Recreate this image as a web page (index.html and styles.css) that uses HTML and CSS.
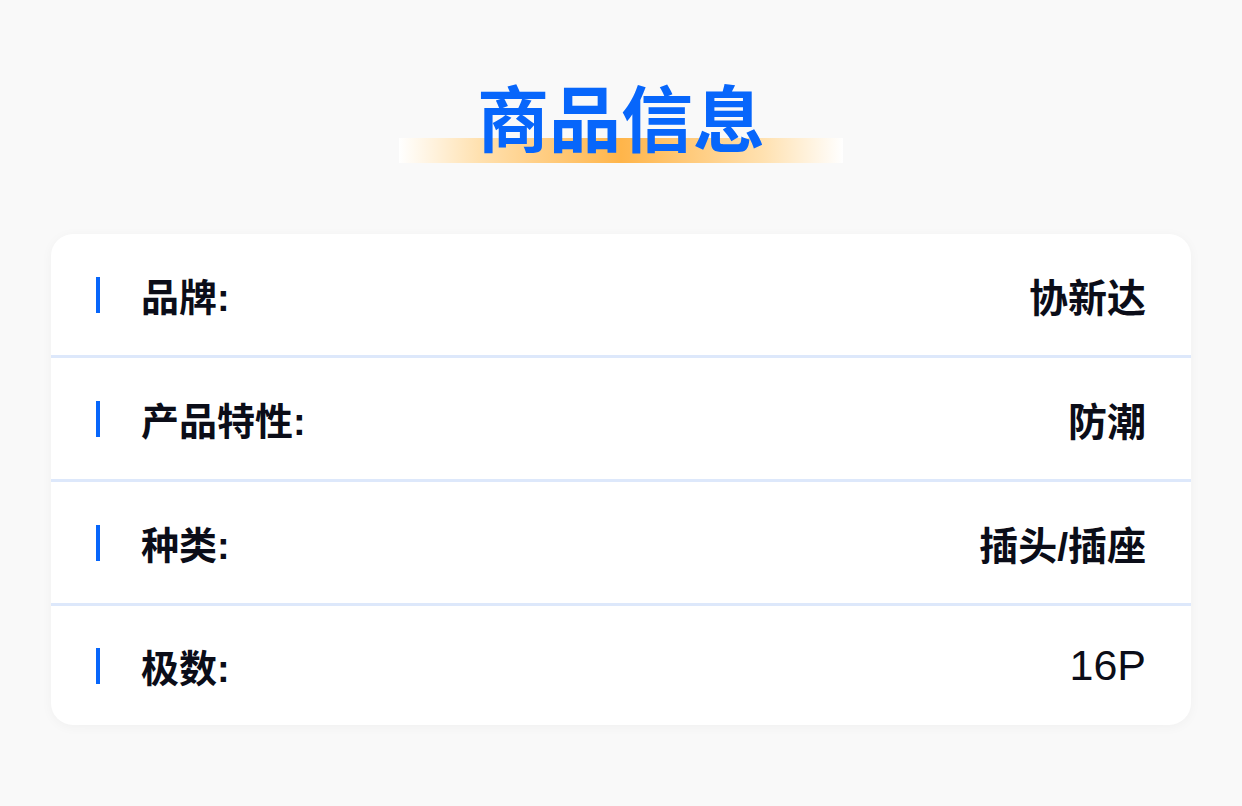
FILE: index.html
```html
<!DOCTYPE html>
<html lang="zh-CN">
<head>
<meta charset="utf-8">
<title>商品信息</title>
<link rel="stylesheet" href="styles.css">
</head>
<body>
<div class="page">
  <header class="header">
    <h1 class="title">商品信息</h1>
  </header>
  <section class="card">
    <div class="row">
      <span class="marker"></span>
      <span class="label">品牌:</span>
      <span class="value">协新达</span>
    </div>
    <div class="row">
      <span class="marker"></span>
      <span class="label">产品特性:</span>
      <span class="value">防潮</span>
    </div>
    <div class="row">
      <span class="marker"></span>
      <span class="label">种类:</span>
      <span class="value">插头/插座</span>
    </div>
    <div class="row">
      <span class="marker"></span>
      <span class="label">极数:</span>
      <span class="value">16P</span>
    </div>
  </section>
</div>
</body>
</html>
```
FILE: styles.css
```css
* { box-sizing: border-box; }
html, body { margin: 0; padding: 0; }
body {
  background: #f9f9f9;
  font-family: "Liberation Sans", "Noto Sans CJK SC", sans-serif;
  color: #0b0d18;
}
.page {
  width: 1242px;
  height: 806px;
  padding: 76px 51px 0 51px;
}
.header {
  display: flex;
  justify-content: center;
  height: 158px;
}
.title {
  margin: 0;
  width: 444px;
  height: 87px;
  text-align: center;
  font-size: 72px;
  line-height: 91px;
  font-weight: 700;
  color: #0766fb;
  letter-spacing: 0;
  background-image: linear-gradient(90deg, #ffffff 0%, #ffe1b0 18%, #ffb54a 50%, #ffe1b0 82%, #ffffff 100%);
  background-repeat: no-repeat;
  background-size: 100% 25px;
  background-position: left bottom;
}
.card {
  background: #ffffff;
  border-radius: 22px;
  box-shadow: 0 2px 12px rgba(0, 0, 0, 0.04);
  overflow: hidden;
}
.row {
  display: flex;
  align-items: center;
  height: 124px;
  padding: 0 45px;
  border-bottom: 3px solid #dde8fb;
}
.row:last-child {
  border-bottom: none;
  height: 119px;
}
.marker {
  width: 4px;
  height: 36px;
  background: #0766fb;
  flex: none;
}
.label {
  margin-left: 41px;
  font-size: 38px;
  font-weight: 700;
  flex: 1;
}
.value {
  font-size: 39px;
  font-weight: 700;
  text-align: right;
}
.row:last-child .value {
  font-weight: 400;
  font-size: 43px;
}
```
